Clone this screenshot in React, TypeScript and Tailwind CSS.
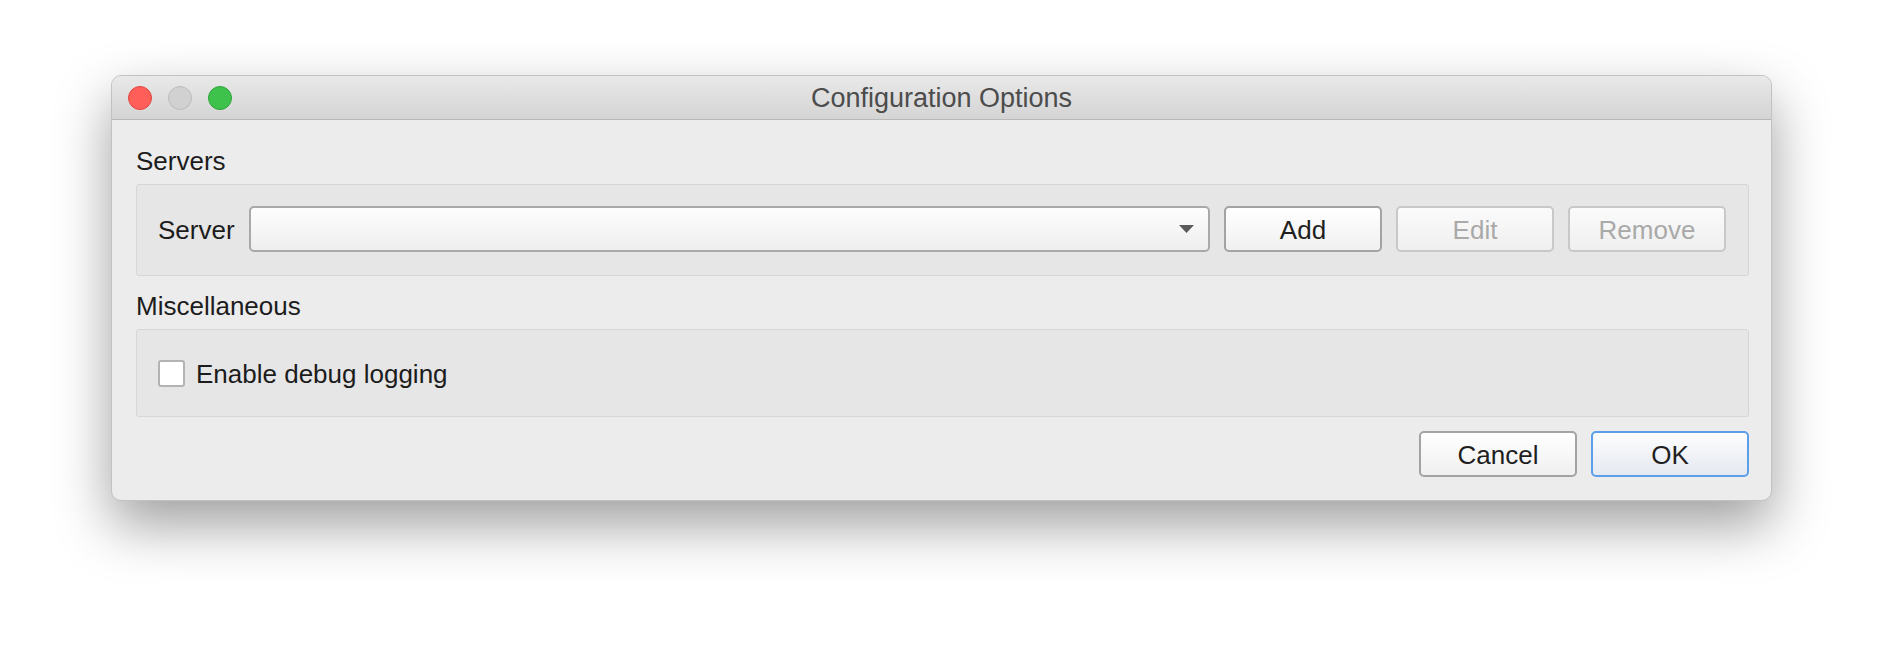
import React from 'react';

const font = { fontFamily: '"Liberation Sans", Arial, sans-serif' };

function Light({ className }: { className: string }) {
  return <div className={`h-[24px] w-[24px] rounded-full border ${className}`} />;
}

function Button({ label, disabled, primary }: { label: string; disabled?: boolean; primary?: boolean }) {
  let cls = 'border-[#a3a3a3] bg-gradient-to-b from-[#ffffff] to-[#f0f0f0] text-[#1f1f1f]';
  if (disabled) cls = 'border-[#c8c8c8] bg-gradient-to-b from-[#fbfbfb] to-[#efefef] text-[#a9a9a9]';
  if (primary) cls = 'border-[#5b9ee9] bg-gradient-to-b from-[#fefefe] to-[#e4e8f0] text-[#1f1f1f]';
  return (
    <button
      className={`flex h-[46px] w-[158px] items-center justify-center rounded-[5px] border-2 pt-[2px] text-[26px] leading-none ${cls}`}
    >
      {label}
    </button>
  );
}

export default function App() {
  return (
    <div className="h-[648px] w-full bg-white pt-[75px]" style={font}>
      <div className="ml-[111px] w-[1661px] overflow-hidden rounded-[10px] border border-[#c2c2c2] bg-[#ececec] shadow-[0_24px_55px_rgba(0,0,0,0.38)]">
        {/* title bar */}
        <div className="relative flex h-[44px] items-center border-b border-[#b8b8b8] bg-gradient-to-b from-[#e9e9e9] to-[#d4d4d4] pl-[16px]">
          <div className="flex gap-[16px]">
            <Light className="border-[#e1453f] bg-[#ff5f58]" />
            <Light className="border-[#bcbcbc] bg-[#d1d1d1]" />
            <Light className="border-[#2ea43a] bg-[#3fc24b]" />
          </div>
          <div className="absolute inset-0 flex items-center justify-center pt-[2px] text-[27px] text-[#4c4c4c]">
            Configuration Options
          </div>
        </div>

        {/* content */}
        <div className="pl-[24px] pr-[22px] pt-[26px] pb-[23px] text-[26px] text-[#1c1c1c]">
          <div className="h-[30px] leading-[30px]">Servers</div>
          <div className="mt-[8px] flex h-[92px] items-start rounded-[3px] border border-[#d6d6d6] bg-[#e6e6e6] pl-[21px] pr-[22px] pt-[21px]">
            <div className="flex w-full items-center gap-[14px]">
              <span className="pt-[2px] leading-none">Server</span>
              <div className="flex h-[46px] flex-1 items-center justify-end rounded-[5px] border-2 border-[#a9a9a9] bg-gradient-to-b from-[#fefefe] to-[#eeeeee] pr-[14px]">
                <svg width="15" height="8" viewBox="0 0 15 8">
                  <path d="M0 0 L15 0 L7.5 8 Z" fill="#5a5a5a" />
                </svg>
              </div>
              <Button label="Add" />
              <Button label="Edit" disabled />
              <Button label="Remove" disabled />
            </div>
          </div>

          <div className="mt-[15px] h-[30px] leading-[30px]">Miscellaneous</div>
          <div className="mt-[8px] h-[88px] rounded-[3px] border border-[#d6d6d6] bg-[#e6e6e6] pl-[21px] pt-[29px]">
            <label className="flex items-center gap-[11px]">
              <span className="h-[27px] w-[27px] rounded-[3px] border-2 border-[#b3b3b3] bg-white" />
              <span className="pt-[2px] leading-none">Enable debug logging</span>
            </label>
          </div>

          <div className="mt-[14px] flex justify-end gap-[14px]">
            <Button label="Cancel" />
            <Button label="OK" primary />
          </div>
        </div>
      </div>
    </div>
  );
}
